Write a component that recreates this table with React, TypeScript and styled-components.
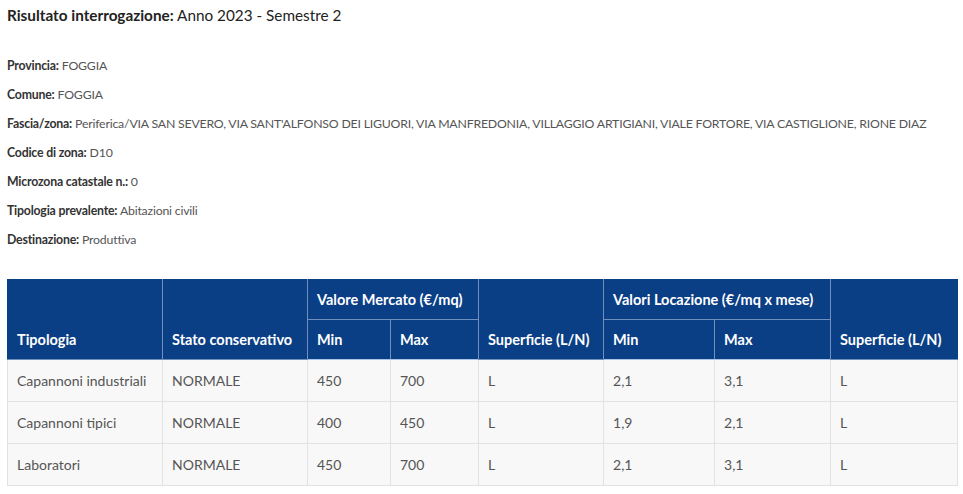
import React from "react";
import styled, { createGlobalStyle } from "styled-components";

const Global = createGlobalStyle`
  html, body { margin: 0; padding: 0; background: #fff; }
  body { font-family: "Lato", "Open Sans", sans-serif; color: #333; }
`;

const Page = styled.div`
  padding: 5px 6px 0 7px;
  width: 950px;
`;

const Title = styled.h1`
  margin: 0;
  font-size: 15.3px;
  line-height: 20px;
  font-weight: 400;
  color: #222;
  b { font-weight: 700; }
`;

const InfoList = styled.div`
  margin-top: 33px;
  display: flex;
  flex-direction: column;
  gap: 13px;
`;

const InfoRow = styled.div`
  font-size: 12.3px;
  letter-spacing: -0.2px;
  line-height: 16px;
  color: #555;
  white-space: nowrap;
  b { font-weight: 700; color: #333; }
`;

const Table = styled.table`
  margin-top: 31px;
  border-collapse: collapse;
  table-layout: fixed;
  width: 950px;
  font-size: 14px;
`;

const Th = styled.th<{ $bottom?: boolean }>`
  background: #0a3e85;
  color: #fff;
  font-weight: 700;
  text-align: left;
  vertical-align: ${(p) => (p.$bottom ? "bottom" : "middle")};
  padding: ${(p) => (p.$bottom ? "0 9px 11px" : "0 9px")};
  height: 39px;
  border: 1px solid #6f8fbd;
  font-size: 14.5px;
  white-space: nowrap;
`;

const HeadRow = styled.tr`
  &:first-child th { border-top-color: #0a3e85; }
`;

const Td = styled.td`
  background: #f8f8f8;
  color: #555;
  padding: 0 9px;
  height: 41px;
  border: 1px solid #e2e2e2;
  font-size: 14px;
  white-space: nowrap;
`;

const THead = styled.thead`
  tr:last-child th { border-bottom: 1px solid #a9c3e6; }
  th:first-child { border-left-color: #0a3e85; }
  th:last-child { border-right-color: #0a3e85; }
`;

const cols = [155, 145, 83, 88, 125, 111, 116, 127];

const rows = [
  ["Capannoni industriali", "NORMALE", "450", "700", "L", "2,1", "3,1", "L"],
  ["Capannoni tipici", "NORMALE", "400", "450", "L", "1,9", "2,1", "L"],
  ["Laboratori", "NORMALE", "450", "700", "L", "2,1", "3,1", "L"],
];

const info: [string, string][] = [
  ["Provincia:", "FOGGIA"],
  ["Comune:", "FOGGIA"],
  [
    "Fascia/zona:",
    "Periferica/VIA SAN SEVERO, VIA SANT'ALFONSO DEI LIGUORI, VIA MANFREDONIA, VILLAGGIO ARTIGIANI, VIALE FORTORE, VIA CASTIGLIONE, RIONE DIAZ",
  ],
  ["Codice di zona:", "D10"],
  ["Microzona catastale n.:", "0"],
  ["Tipologia prevalente:", "Abitazioni civili"],
  ["Destinazione:", "Produttiva"],
];

export default function App() {
  return (
    <Page>
      <Global />
      <Title>
        <b>Risultato interrogazione:</b> Anno 2023 - Semestre 2
      </Title>
      <InfoList>
        {info.map(([k, v]) => (
          <InfoRow key={k}>
            <b>{k}</b> {v}
          </InfoRow>
        ))}
      </InfoList>
      <Table>
        <colgroup>
          {cols.map((w, i) => (
            <col key={i} style={{ width: w }} />
          ))}
        </colgroup>
        <THead>
          <HeadRow>
            <Th rowSpan={2} $bottom>Tipologia</Th>
            <Th rowSpan={2} $bottom>Stato conservativo</Th>
            <Th colSpan={2}>Valore Mercato (€/mq)</Th>
            <Th rowSpan={2} $bottom>Superficie (L/N)</Th>
            <Th colSpan={2}>Valori Locazione (€/mq x mese)</Th>
            <Th rowSpan={2} $bottom>Superficie (L/N)</Th>
          </HeadRow>
          <HeadRow>
            <Th>Min</Th>
            <Th>Max</Th>
            <Th>Min</Th>
            <Th>Max</Th>
          </HeadRow>
        </THead>
        <tbody>
          {rows.map((r, i) => (
            <tr key={i}>
              {r.map((c, j) => (
                <Td key={j}>{c}</Td>
              ))}
            </tr>
          ))}
        </tbody>
      </Table>
    </Page>
  );
}
